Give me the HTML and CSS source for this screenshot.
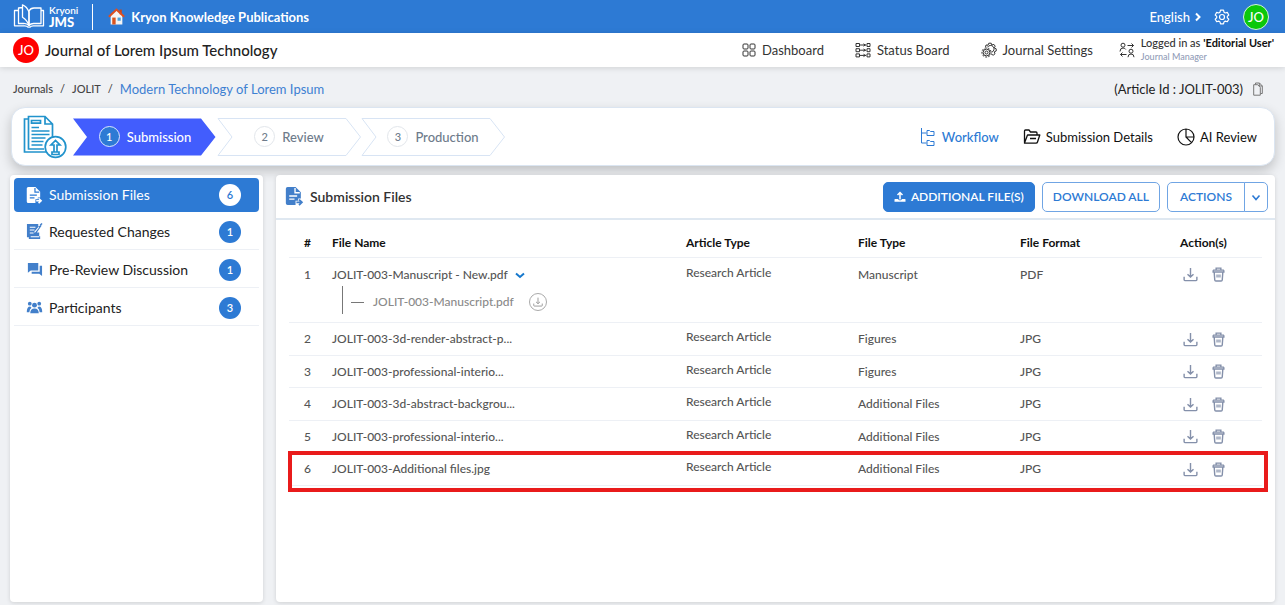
FILE: index.html
```html
<!DOCTYPE html>
<html lang="en">
<head>
<meta charset="utf-8">
<title>Kryoni JMS - Submission Files</title>
<link rel="stylesheet" href="styles.css">
</head>
<body>
<svg class="sprite" aria-hidden="true">
  <symbol id="i-download" viewBox="0 0 16 16"><path d="M8 1v9.500M4.800 7.700 8 10.800l3.200-3.100M1.200 10.500v3.200q0 .8.800.8h12q.8 0 .8-.8v-3.200" fill="none" stroke="currentColor" stroke-width="1.500"/></symbol>
  <symbol id="i-trash" viewBox="0 0 14 16"><path d="M1.200 3.300h11.600M4.500 3V1.200h5V3M1.300 3.500v1.800h11.400V3.500M2.400 5.500l.6 8.300q.1 1.200 1.200 1.200h5.600q1.100 0 1.200-1.200l.6-8.300" fill="none" stroke="currentColor" stroke-width="1.500"/><path d="M4.500 8h5v3.200h-5z" fill="currentColor" opacity=".65"/></symbol>
  <symbol id="i-file" viewBox="0 0 18 18"><path d="M2.500 0H10l5 5v6h-2.500v2H10v4H2.500Q.8 17 .8 15.300V1.700Q.8 0 2.500 0z" fill="currentColor"/><path d="M9.500 1v4.500H14M4 8.500h7.500M4 11.500h5" fill="none" stroke="var(--cut)" stroke-width="1.300"/><path d="M10.800 14.500h4.500m-2-2.600 2.700 2.600-2.700 2.600" fill="none" stroke="currentColor" stroke-width="1.700"/></symbol>
</svg>

<header class="topbar">
  <a class="logo" href="#">
    <svg class="logo-mark" viewBox="0 0 32 26" aria-hidden="true"><g fill="none" stroke="#fff" stroke-width="1.300" stroke-linejoin="round"><path d="M6 6.500H1.500v15.300h10.200q2.200 0 3.500 1.400h1.600q1.300-1.400 3.500-1.400h10.200V6.500H28"/><path d="M16 21.500q-2-2-5-2.200M16 21.500q1.800-2 4.500-2H28V4h-7q-3.500 0-5 3z"/><path d="M16 21.500V8Q14 2.500 9.500.8v12.500Q14 16 16 21.500zM9.500 3.500 5.500 4v15.500h5.500"/></g></svg>
    <span class="logo-text"><span>Kryoni</span><strong>JMS</strong></span>
  </a>
  <span class="divider"></span>
  <a class="home" href="#">
    <svg class="home-icon" viewBox="0 0 16 16" aria-hidden="true"><path d="M2.500 7 8 2l5.500 5v8.500h-11z" fill="#f4f4f4"/><path d="M11 1.500h2V6h-2z" fill="#c9461e"/><path d="M.8 8.300 8 1.500l7.200 6.800" fill="none" stroke="#dd4f20" stroke-width="2"/><path d="M4 9h3.200v6.500H4z" fill="#d9541e"/><path d="M9 9h3v3H9z" fill="#4aa3df"/></svg>
    Kryon Knowledge Publications
  </a>
  <div class="topbar-right">
    <button class="language" type="button">English
      <svg class="chev" viewBox="0 0 6 10" aria-hidden="true"><path d="m1 1.500 3.500 3.500L1 8.500" fill="none" stroke="#fff" stroke-width="2"/></svg>
    </button>
    <button class="plain" type="button" aria-label="Settings">
      <svg class="gear" viewBox="0 0 16 16" aria-hidden="true"><path d="M6.500 1.200h3l.5 2 1.300.8 2-.6 1.500 2.600-1.500 1.400v1.300l1.500 1.400-1.500 2.600-2-.6-1.300.8-.5 2h-3l-.5-2-1.300-.8-2 .6-1.500-2.600 1.500-1.400V7.400L1.200 6l1.500-2.600 2 .6L6 3.200z" fill="none" stroke="#fff" stroke-width="1.200" stroke-linejoin="round"/><circle cx="8" cy="8" r="2.500" fill="none" stroke="#fff" stroke-width="1.200"/></svg>
    </button>
    <span class="avatar avatar-user">JO</span>
  </div>
</header>

<div class="journalbar">
  <span class="avatar avatar-journal">JO</span>
  <h1 class="journal-name">Journal of Lorem Ipsum Technology</h1>
  <nav class="journal-nav">
    <a href="#"><svg class="ic-s" viewBox="0 0 14 14" aria-hidden="true"><g fill="none" stroke="currentColor"><rect x="1" y="1" width="5" height="5" rx="1"/><rect x="8" y="1" width="5" height="5" rx="1"/><rect x="1" y="8" width="5" height="5" rx="1"/><rect x="8" y="8" width="5" height="5" rx="1"/></g></svg>Dashboard</a>
    <a href="#"><svg class="ic-m" viewBox="0 0 16 16" aria-hidden="true"><path d="M1 1.500h3.500v3H1zM1 6.700h3.500v3H1zM1 11.900h3.500v3H1zM12 1.500h3v3h-3zM12 6.700h3v3h-3zM12 11.900h3v3h-3zM5 3h6M5 8.200h6M5 13.400h6M8.500 1.800 10.300 3 8.500 4.200M8.500 7l1.800 1.200-1.800 1.200M8.500 12.200l1.800 1.200-1.800 1.200" fill="none" stroke="currentColor"/></svg>Status Board</a>
    <a href="#"><svg class="ic-m" viewBox="0 0 16 16" aria-hidden="true"><g fill="none" stroke="currentColor"><circle cx="5.500" cy="10.500" r="3.400"/><circle cx="5.500" cy="10.500" r="1.500"/><circle cx="5.500" cy="10.500" r="4.600" stroke-dasharray="2 1.200"/><path d="M4.500 5.300 5 3l2 .2.800-2h2.400l.7 1.800 2-.6 1.300 1.800-1 1.600 2 1v2.200l-1.900.8.700 2-1.700 1.300-2-.8M6.500 5.200a3.500 3.500 0 1 1 4.300 5"/></g></svg>Journal Settings</a>
  </nav>
  <button class="role" type="button">
    <svg class="ic-m" viewBox="0 0 16 16" aria-hidden="true"><g fill="none" stroke="currentColor"><circle cx="4" cy="3.200" r="2"/><circle cx="12" cy="9.200" r="2"/><path d="M1 9.500Q1 6 4 6q2 0 2.800 1.500M9 15.200Q9 12 12 12t3 3.200M8.500 3.500h6M12.500 1.500l2 2-2 2M7.500 12.500h-6M3.500 10.500l-2 2 2 2"/></g></svg>
    <span class="role-text"><span>Logged in as <b>'Editorial User'</b></span><small>Journal Manager</small></span>
  </button>
</div>

<div class="crumbbar">
  <nav class="crumbs" aria-label="Breadcrumb">
    <a href="#">Journals</a><span>/</span><a href="#">JOLIT</a><span>/</span><a class="current" href="#">Modern Technology of Lorem Ipsum</a>
  </nav>
  <span class="article-id">(Article Id : JOLIT-003)</span>
  <button class="plain copy" type="button" aria-label="Copy article id">
    <svg viewBox="0 0 10 14" aria-hidden="true"><path d="M2.500 2.500V1h4L9.300 4v7.500H7.500M.7 2.700h4L7.300 5.500v7.700H.7zM6.300 1v3h3" fill="none" stroke="currentColor"/></svg>
  </button>
</div>

<section class="stagecard">
  <svg class="doc-icon" viewBox="0 0 44 44" aria-hidden="true"><g fill="none" stroke="#2193cc" stroke-width="1.700"><path d="M24 37H1.500V4H5M21 34H5.500V1.500H22L29.500 9v13M22 1.500V9h7.500M8.500 5.500h9v2.700h-9zM8.500 12.500H16M8.500 16h18M8.500 19.500h18M8.500 23h14M8.500 26.500h12M8.500 30h11"/><circle cx="32.500" cy="32" r="10.300"/><path d="M31 37v-7h-3l4.500-4.500L37 30h-3v7M29 37h7v2.500h-7z"/></g></svg>
  <ol class="steps">
    <li class="step active">
      <svg class="step-shape" viewBox="0 0 144 38" preserveAspectRatio="none" aria-hidden="true"><path d="M0 .5h128l14.500 18.500L128 37.500H0L14 19z"/></svg>
      <span class="step-no">1</span>Submission
    </li>
    <li class="step">
      <svg class="step-shape" viewBox="0 0 144 38" preserveAspectRatio="none" aria-hidden="true"><path d="M1 .5h128l14.500 18.500L129 37.500H1L15 19z"/></svg>
      <span class="step-no">2</span>Review
    </li>
    <li class="step">
      <svg class="step-shape" viewBox="0 0 144 38" preserveAspectRatio="none" aria-hidden="true"><path d="M1 .5h128l14.500 18.500L129 37.500H1L15 19z"/></svg>
      <span class="step-no">3</span>Production
    </li>
  </ol>
  <nav class="views">
    <a class="current" href="#"><svg viewBox="0 0 18 18" aria-hidden="true"><path d="M2.500 0v15h5M2.500 5h5M8 2.500h2.500l1 1H15v4H8zM8 12.500h2.500l1 1H15v4H8z" fill="none" stroke="currentColor"/></svg>Workflow</a>
    <a href="#"><svg viewBox="0 0 18 18" aria-hidden="true"><path d="M1.500 14.500V3q0-1 1-1H6l1.500 2H13q1 0 1 1v2M1.500 15 4.500 7h12.300L14.500 14q-.3 1.200-1.500 1.200H1.500zM7 10.500h6" fill="none" stroke="currentColor" stroke-width="1.300" stroke-linejoin="round"/></svg>Submission Details</a>
    <a href="#"><svg viewBox="0 0 18 18" aria-hidden="true"><path d="M9 1v8h8A8 8 0 1 1 9 1a8 8 0 0 1 8 8M9 9l5.500 5.700" fill="none" stroke="currentColor" stroke-width="1.200"/></svg>AI Review</a>
  </nav>
</section>

<div class="workspace">
  <nav class="sidebar">
    <a class="side-item active" href="#"><svg viewBox="0 0 18 18" aria-hidden="true"><use href="#i-file"/></svg><span class="side-label">Submission Files</span><span class="count">6</span></a>
    <a class="side-item" href="#"><svg viewBox="0 0 18 18" aria-hidden="true"><path d="M1 1h12v3l2.500-2 1 1-5 7H14v4h1v3H3v-2H1z" fill="currentColor"/><path d="M4 4.500h6M4 7.500h5M4 10.500h4M5 14.500h9M9 10l4.500-5.500" stroke="#fff" stroke-width="1.100" fill="none"/><path d="m15 2.500 2-2" stroke="currentColor" stroke-width="1.500"/></svg><span class="side-label">Requested Changes</span><span class="count">1</span></a>
    <a class="side-item" href="#"><svg viewBox="0 0 18 18" aria-hidden="true"><path d="M2 2h11v8H5l-3 2.500zM14.500 5H17v11l-3-2.500H6V11.500h8.500z" fill="currentColor"/></svg><span class="side-label">Pre-Review Discussion</span><span class="count">1</span></a>
    <a class="side-item" href="#"><svg viewBox="0 0 18 18" aria-hidden="true"><g fill="currentColor"><circle cx="9" cy="6.500" r="2.600"/><circle cx="4" cy="5" r="2"/><circle cx="14" cy="5" r="2"/><path d="M4.500 15q0-5 4.500-5t4.500 5zM.8 14q0-6 3.600-6l1.500 1.200Q3.700 10.500 3.500 14zM17.200 14q0-6-3.600-6l-1.500 1.200q2.200 1.300 2.400 4.800z"/></g></svg><span class="side-label">Participants</span><span class="count">3</span></a>
  </nav>

  <main class="panel">
    <div class="panel-head">
      <svg class="panel-icon" viewBox="0 0 18 18" aria-hidden="true"><use href="#i-file"/></svg>
      <h2>Submission Files</h2>
      <div class="buttons">
        <button class="btn primary" type="button"><svg viewBox="0 0 12 12" aria-hidden="true"><path d="M6 8.500V2M3.500 4 6 1.500 8.500 4" fill="none" stroke="#fff" stroke-width="1.500"/><path d="M1 8h3l1 1.200h2L8 8h3q.5 0 .5.500v2.300H.5V8.500Q.5 8 1 8z" fill="#fff"/></svg>ADDITIONAL FILE(S)</button>
        <button class="btn" type="button">DOWNLOAD ALL</button>
        <div class="split"><button class="btn" type="button">ACTIONS</button><button class="btn more" type="button" aria-label="More actions"><svg viewBox="0 0 10 10" aria-hidden="true"><path d="m1.500 3.500 3.500 4 3.500-4" fill="none" stroke="currentColor" stroke-width="1.600"/></svg></button></div>
      </div>
    </div>

    <div class="table-wrap">
      <table class="files">
        <colgroup><col class="c-no"><col class="c-name"><col class="c-article"><col class="c-type"><col class="c-format"><col class="c-actions"></colgroup>
        <thead>
          <tr><th>#</th><th>File Name</th><th>Article Type</th><th>File Type</th><th>File Format</th><th>Action(s)</th></tr>
        </thead>
        <tbody>
          <tr class="tall">
            <td>1</td>
            <td>
              <div class="file-line">JOLIT-003-Manuscript - New.pdf <button class="plain toggle" type="button" aria-label="Hide earlier versions"><svg viewBox="0 0 10 8" aria-hidden="true"><path d="m1 2.500 4 3.500 4-3.500" fill="none" stroke="currentColor" stroke-width="2"/></svg></button></div>
              <div class="version"><span class="dash"></span>JOLIT-003-Manuscript.pdf <button class="plain round" type="button" aria-label="Download"><svg viewBox="0 0 16 16" aria-hidden="true"><use href="#i-download"/></svg></button></div>
            </td>
            <td class="article">Research Article</td><td>Manuscript</td><td>PDF</td>
            <td><div class="acts"><button class="plain" type="button" aria-label="Download"><svg><use href="#i-download"/></svg></button><button class="plain" type="button" aria-label="Delete"><svg><use href="#i-trash"/></svg></button></div></td>
          </tr>
          <tr>
            <td>2</td><td>JOLIT-003-3d-render-abstract-p...</td><td class="article">Research Article</td><td>Figures</td><td>JPG</td>
            <td><div class="acts"><button class="plain" type="button" aria-label="Download"><svg><use href="#i-download"/></svg></button><button class="plain" type="button" aria-label="Delete"><svg><use href="#i-trash"/></svg></button></div></td>
          </tr>
          <tr>
            <td>3</td><td>JOLIT-003-professional-interio...</td><td class="article">Research Article</td><td>Figures</td><td>JPG</td>
            <td><div class="acts"><button class="plain" type="button" aria-label="Download"><svg><use href="#i-download"/></svg></button><button class="plain" type="button" aria-label="Delete"><svg><use href="#i-trash"/></svg></button></div></td>
          </tr>
          <tr>
            <td>4</td><td>JOLIT-003-3d-abstract-backgrou...</td><td class="article">Research Article</td><td>Additional Files</td><td>JPG</td>
            <td><div class="acts"><button class="plain" type="button" aria-label="Download"><svg><use href="#i-download"/></svg></button><button class="plain" type="button" aria-label="Delete"><svg><use href="#i-trash"/></svg></button></div></td>
          </tr>
          <tr>
            <td>5</td><td>JOLIT-003-professional-interio...</td><td class="article">Research Article</td><td>Additional Files</td><td>JPG</td>
            <td><div class="acts"><button class="plain" type="button" aria-label="Download"><svg><use href="#i-download"/></svg></button><button class="plain" type="button" aria-label="Delete"><svg><use href="#i-trash"/></svg></button></div></td>
          </tr>
          <tr class="marked">
            <td>6</td><td>JOLIT-003-Additional files.jpg</td><td class="article">Research Article</td><td>Additional Files</td><td>JPG</td>
            <td><div class="acts"><button class="plain" type="button" aria-label="Download"><svg><use href="#i-download"/></svg></button><button class="plain" type="button" aria-label="Delete"><svg><use href="#i-trash"/></svg></button></div></td>
          </tr>
        </tbody>
      </table>
    </div>
  </main>
</div>
</body>
</html>
```

FILE: styles.css
```css
:root { --blue: #2d7ad4; --line: #edf0f5; --cut: #fff; }
* { box-sizing: border-box; }
body {
  margin: 0; min-height: 100vh; display: flex; flex-direction: column;
  background: #eff1f4; color: #222; font: 500 13px/16px Lato, sans-serif;
}
a { color: inherit; text-decoration: none; }
button { font: inherit; color: inherit; cursor: pointer; }
svg { display: block; flex: none; }
.sprite { position: absolute; width: 0; height: 0; }
.plain { border: 0; background: none; padding: 0; display: block; }

.topbar { display: flex; align-items: center; height: 33px; padding: 0 16px 0 13px; background: var(--blue); color: #fff; }
.logo { display: flex; align-items: center; gap: 4px; }
.logo-mark { width: 32px; height: 26px; }
.logo-text { display: flex; flex-direction: column; padding-bottom: 2px; font-size: 10px; line-height: 12px; font-weight: 600; }
.logo-text strong { font-size: 13px; }
.divider { width: 1px; height: 26px; margin: 0 15px 0 14px; background: #fff; }
.home { display: flex; align-items: center; gap: 6px; font-weight: 700; }
.home-icon { width: 17px; height: 17px; }
.topbar-right { display: flex; align-items: center; gap: 13px; margin-left: auto; }
.language { display: flex; align-items: center; gap: 5px; border: 0; background: none; padding: 0; }
.chev { width: 6px; height: 10px; }
.gear { width: 16px; height: 16px; }
.avatar { display: flex; align-items: center; justify-content: center; width: 26px; height: 26px; border-radius: 50%; color: #fff; }
.avatar-user { background: #0bc80b; border: 1px solid #d5f2e0; }
.avatar-journal { background: #f00; }

.journalbar { display: flex; align-items: center; height: 34px; padding: 0 11px 0 13px; background: #fff; box-shadow: 0 1px 6px #0002; }
.journal-name { margin: 0 0 0 6px; font-size: 15px; font-weight: 500; }
.journal-nav { display: flex; gap: 31px; margin: 0 26px 0 auto; color: #333; font-weight: 400; }
.journal-nav a { display: flex; align-items: center; gap: 6px; }
.ic-s { width: 14px; height: 14px; }
.ic-m { width: 16px; height: 16px; }
.role { display: flex; align-items: center; gap: 6px; border: 0; background: none; padding: 0; text-align: left; color: #333; font-size: 11px; }
.role b { color: #111; }
.role-text { display: flex; flex-direction: column; line-height: 14px; }
.role small { font-size: 9px; color: #929db8; }

.crumbbar { display: flex; align-items: center; height: 40px; padding: 4px 22px 0 13px; }
.crumbs { display: flex; gap: 7px; color: #444; font-size: 11px; }
.crumbs .current { color: #3d80d2; font-size: 13px; font-weight: 400; }
.article-id { margin-left: auto; font-weight: 400; }
.copy { margin-left: 10px; color: #777; }
.copy svg { width: 10px; height: 14px; }

.stagecard {
  display: flex; align-items: center; height: 59px; margin: 0 10px 0 11px; padding: 0 17px 0 11px;
  border: 1px solid #dbe5f1; border-radius: 14px; background: #fff; box-shadow: 0 5px 12px #0003;
}
.doc-icon { width: 44px; height: 44px; }
.steps { display: flex; margin: 0 0 0 6px; padding: 0; list-style: none; }
.step { position: relative; display: flex; align-items: center; justify-content: center; gap: 7px; width: 144px; height: 38px; color: #6e7b8b; isolation: isolate; }
.step-shape { position: absolute; inset: 0; width: 100%; height: 100%; z-index: -1; fill: #fff; stroke: #d8e4f4; }
.step.active { color: #fff; }
.active .step-shape { fill: #425dfd; stroke: none; }
.step-no { display: flex; align-items: center; justify-content: center; width: 21px; height: 21px; border: 1px solid #e2e6eb; border-radius: 50%; font-size: 11px; }
.active .step-no { background: var(--blue); border-color: #dbe8ff; }
.views { display: flex; gap: 24px; margin-left: auto; color: #111; font-weight: 400; }
.views a { display: flex; align-items: center; gap: 5px; }
.views svg { width: 18px; height: 18px; }
.views .current { color: var(--blue); font-weight: 500; }

.workspace { flex: 1; display: flex; gap: 13px; padding: 9px 10px 3px; }
.sidebar, .panel { background: #fff; border-radius: 4px; box-shadow: 0 1px 4px #0002; }
.sidebar { width: 253px; padding: 3px 4px; }
.side-item { display: flex; align-items: center; gap: 6px; height: 38px; padding: 2px 18px 0 12px; border-bottom: 1px solid var(--line); font-size: 14px; font-weight: 400; }
.side-item svg { width: 17px; height: 17px; color: #427fca; }
.side-item.active { height: 34px; padding-top: 0; background: var(--blue); color: #fff; border: 0; border-radius: 4px; --cut: var(--blue); }
.side-item.active svg { color: #fff; }
.side-label { flex: 1; }
.count { display: flex; align-items: center; justify-content: center; width: 22px; height: 22px; border-radius: 50%; background: var(--blue); color: #fff; font-size: 11px; font-weight: 600; }
.active .count { background: #fff; color: var(--blue); }

.panel { flex: 1; min-width: 0; }
.panel-head { display: flex; align-items: center; height: 45px; padding: 0 7px 0 9px; border-bottom: 2px solid #dfe8f1; }
.panel-icon { width: 19px; height: 19px; color: #427fca; }
.panel h2 { margin: 0 0 0 6px; font-size: 14px; font-weight: 600; color: #333; }
.buttons { display: flex; gap: 7px; margin-left: auto; }
.btn { display: flex; align-items: center; gap: 5px; height: 30px; padding: 0 10px; border: 1px solid #70a5e4; border-radius: 5px; background: #fff; color: var(--blue); font-size: 12px; font-weight: 600; }
.btn svg { width: 12px; height: 12px; }
.btn.primary { background: var(--blue); border-color: var(--blue); color: #fff; }
.split { display: flex; }
.split .btn:first-child { padding: 0 12px; border-radius: 5px 0 0 5px; }
.split .btn.more { padding: 0 6px; margin-left: -1px; border-radius: 0 5px 5px 0; }
.more svg { width: 10px; height: 10px; }

.table-wrap { padding: 8px 13px 0; }
.files { width: 100%; table-layout: fixed; border-collapse: separate; border-spacing: 0; color: #555; font-size: 12px; }
.c-no { width: 43px; } .c-name { width: auto; } .c-article { width: 172px; } .c-type { width: 162px; } .c-format { width: 160px; } .c-actions { width: 82px; }
.files th { height: 30px; padding: 0; text-align: left; color: #111; font-size: 12px; font-weight: 700; border-bottom: 1px solid var(--line); }
.files td { height: 33px; padding: 0; border-bottom: 1px solid var(--line); }
.files th:first-child, .files td:first-child { padding-left: 15px; }
.files .article { padding-bottom: 4px; }
.files tr:nth-child(odd) td { height: 32px; }
.files tr.tall td { height: 65px; padding-top: 9px; vertical-align: top; }
.files tr.tall .article { padding-top: 7px; }
.file-line { display: flex; align-items: center; gap: 7px; }
.toggle { color: #1678cd; }
.toggle svg { width: 10px; height: 8px; }
.version { display: flex; align-items: center; height: 28px; margin: 3px 0 0 10px; padding: 4px 0 0 8px; border-left: 1px solid #777; color: #8a8a8a; }
.version .dash { width: 13px; height: 1px; margin-right: 9px; background: #777; }
.round { display: flex; align-items: center; justify-content: center; width: 18px; height: 18px; margin-left: 15px; border: 1px solid #aaa; border-radius: 50%; color: #999; }
.round svg { width: 10px; height: 10px; }
.acts { display: flex; gap: 13px; padding-left: 3px; color: #8490aa; }
.acts svg { width: 15px; height: 15px; }
.marked { position: relative; }
.marked td:first-child::after { content: ""; position: absolute; inset: -2px -6px -6px -1px; border: 4px solid #e91b1b; pointer-events: none; }
```
